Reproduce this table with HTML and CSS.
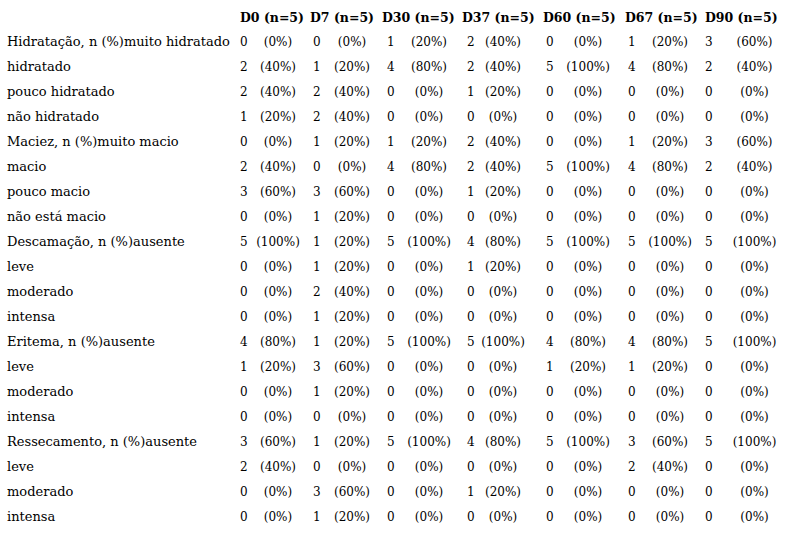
FILE: index.html
```html
<!DOCTYPE html>
<html lang="pt">
<head>
<meta charset="utf-8">
<link rel="stylesheet" href="styles.css">
</head>
<body>
<table class="tbl">
<colgroup>
<col class="c-label">
<col class="c-n0"><col class="c-p0">
<col class="c-n1"><col class="c-p1">
<col class="c-n2"><col class="c-p2">
<col class="c-n3"><col class="c-p3">
<col class="c-n4"><col class="c-p4">
<col class="c-n5"><col class="c-p5">
<col class="c-n6"><col class="c-p6">
</colgroup>
<thead>
<tr>
<th></th>
<th colspan="2">D0 (n=5)</th>
<th colspan="2">D7 (n=5)</th>
<th colspan="2">D30 (n=5)</th>
<th colspan="2">D37 (n=5)</th>
<th colspan="2">D60 (n=5)</th>
<th colspan="2">D67 (n=5)</th>
<th colspan="2">D90 (n=5)</th>
</tr>
</thead>
<tbody>
<tr><td>Hidratação, n (%)muito hidratado</td><td>0</td><td>(0%)</td><td>0</td><td>(0%)</td><td>1</td><td>(20%)</td><td>2</td><td>(40%)</td><td>0</td><td>(0%)</td><td>1</td><td>(20%)</td><td>3</td><td>(60%)</td></tr>
<tr><td>hidratado</td><td>2</td><td>(40%)</td><td>1</td><td>(20%)</td><td>4</td><td>(80%)</td><td>2</td><td>(40%)</td><td>5</td><td>(100%)</td><td>4</td><td>(80%)</td><td>2</td><td>(40%)</td></tr>
<tr><td>pouco hidratado</td><td>2</td><td>(40%)</td><td>2</td><td>(40%)</td><td>0</td><td>(0%)</td><td>1</td><td>(20%)</td><td>0</td><td>(0%)</td><td>0</td><td>(0%)</td><td>0</td><td>(0%)</td></tr>
<tr><td>não hidratado</td><td>1</td><td>(20%)</td><td>2</td><td>(40%)</td><td>0</td><td>(0%)</td><td>0</td><td>(0%)</td><td>0</td><td>(0%)</td><td>0</td><td>(0%)</td><td>0</td><td>(0%)</td></tr>
<tr><td>Maciez, n (%)muito macio</td><td>0</td><td>(0%)</td><td>1</td><td>(20%)</td><td>1</td><td>(20%)</td><td>2</td><td>(40%)</td><td>0</td><td>(0%)</td><td>1</td><td>(20%)</td><td>3</td><td>(60%)</td></tr>
<tr><td>macio</td><td>2</td><td>(40%)</td><td>0</td><td>(0%)</td><td>4</td><td>(80%)</td><td>2</td><td>(40%)</td><td>5</td><td>(100%)</td><td>4</td><td>(80%)</td><td>2</td><td>(40%)</td></tr>
<tr><td>pouco macio</td><td>3</td><td>(60%)</td><td>3</td><td>(60%)</td><td>0</td><td>(0%)</td><td>1</td><td>(20%)</td><td>0</td><td>(0%)</td><td>0</td><td>(0%)</td><td>0</td><td>(0%)</td></tr>
<tr><td>não está macio</td><td>0</td><td>(0%)</td><td>1</td><td>(20%)</td><td>0</td><td>(0%)</td><td>0</td><td>(0%)</td><td>0</td><td>(0%)</td><td>0</td><td>(0%)</td><td>0</td><td>(0%)</td></tr>
<tr><td>Descamação, n (%)ausente</td><td>5</td><td>(100%)</td><td>1</td><td>(20%)</td><td>5</td><td>(100%)</td><td>4</td><td>(80%)</td><td>5</td><td>(100%)</td><td>5</td><td>(100%)</td><td>5</td><td>(100%)</td></tr>
<tr><td>leve</td><td>0</td><td>(0%)</td><td>1</td><td>(20%)</td><td>0</td><td>(0%)</td><td>1</td><td>(20%)</td><td>0</td><td>(0%)</td><td>0</td><td>(0%)</td><td>0</td><td>(0%)</td></tr>
<tr><td>moderado</td><td>0</td><td>(0%)</td><td>2</td><td>(40%)</td><td>0</td><td>(0%)</td><td>0</td><td>(0%)</td><td>0</td><td>(0%)</td><td>0</td><td>(0%)</td><td>0</td><td>(0%)</td></tr>
<tr><td>intensa</td><td>0</td><td>(0%)</td><td>1</td><td>(20%)</td><td>0</td><td>(0%)</td><td>0</td><td>(0%)</td><td>0</td><td>(0%)</td><td>0</td><td>(0%)</td><td>0</td><td>(0%)</td></tr>
<tr><td>Eritema, n (%)ausente</td><td>4</td><td>(80%)</td><td>1</td><td>(20%)</td><td>5</td><td>(100%)</td><td>5</td><td>(100%)</td><td>4</td><td>(80%)</td><td>4</td><td>(80%)</td><td>5</td><td>(100%)</td></tr>
<tr><td>leve</td><td>1</td><td>(20%)</td><td>3</td><td>(60%)</td><td>0</td><td>(0%)</td><td>0</td><td>(0%)</td><td>1</td><td>(20%)</td><td>1</td><td>(20%)</td><td>0</td><td>(0%)</td></tr>
<tr><td>moderado</td><td>0</td><td>(0%)</td><td>1</td><td>(20%)</td><td>0</td><td>(0%)</td><td>0</td><td>(0%)</td><td>0</td><td>(0%)</td><td>0</td><td>(0%)</td><td>0</td><td>(0%)</td></tr>
<tr><td>intensa</td><td>0</td><td>(0%)</td><td>0</td><td>(0%)</td><td>0</td><td>(0%)</td><td>0</td><td>(0%)</td><td>0</td><td>(0%)</td><td>0</td><td>(0%)</td><td>0</td><td>(0%)</td></tr>
<tr><td>Ressecamento, n (%)ausente</td><td>3</td><td>(60%)</td><td>1</td><td>(20%)</td><td>5</td><td>(100%)</td><td>4</td><td>(80%)</td><td>5</td><td>(100%)</td><td>3</td><td>(60%)</td><td>5</td><td>(100%)</td></tr>
<tr><td>leve</td><td>2</td><td>(40%)</td><td>0</td><td>(0%)</td><td>0</td><td>(0%)</td><td>0</td><td>(0%)</td><td>0</td><td>(0%)</td><td>2</td><td>(40%)</td><td>0</td><td>(0%)</td></tr>
<tr><td>moderado</td><td>0</td><td>(0%)</td><td>3</td><td>(60%)</td><td>0</td><td>(0%)</td><td>1</td><td>(20%)</td><td>0</td><td>(0%)</td><td>0</td><td>(0%)</td><td>0</td><td>(0%)</td></tr>
<tr><td>intensa</td><td>0</td><td>(0%)</td><td>1</td><td>(20%)</td><td>0</td><td>(0%)</td><td>0</td><td>(0%)</td><td>0</td><td>(0%)</td><td>0</td><td>(0%)</td><td>0</td><td>(0%)</td></tr>
</tbody>
</table>
</body>
</html>
```

FILE: styles.css
```css
html, body {
  margin: 0;
  padding: 0;
  background: #ffffff;
}

body {
  font-family: "DejaVu Serif", "Liberation Serif", serif;
  font-size: 12px;
  color: #000000;
}

.tbl {
  margin-top: 5px;
  border-collapse: collapse;
  table-layout: fixed;
  width: 787px;
}

.tbl th,
.tbl td {
  padding: 0;
  white-space: nowrap;
  vertical-align: middle;
}

.tbl thead tr { height: 24px; }
.tbl tbody tr { height: 25px; }

.tbl th {
  font-weight: bold;
  font-size: 12.5px;
  text-align: left;
}

.c-label { width: 236px; }
.c-n0 { width: 16px; } .c-p0 { width: 52px; }
.c-n1 { width: 22px; } .c-p1 { width: 52px; }
.c-n2 { width: 22px; } .c-p2 { width: 58px; }
.c-n3 { width: 22px; } .c-p3 { width: 46px; }
.c-n4 { width: 34px; } .c-p4 { width: 56px; }
.c-n5 { width: 26px; } .c-p5 { width: 56px; }
.c-n6 { width: 24px; } .c-p6 { width: 65px; }

.tbl td:first-child {
  padding-left: 7px;
  font-size: 13px;
  text-align: left;
}

.tbl td:nth-child(odd) { text-align: center; }
.tbl td:first-child { text-align: left; }

.tbl td:nth-child(2) { padding-left: 4px; }
.tbl td:nth-child(4) { padding-left: 9px; }
.tbl td:nth-child(6) { padding-left: 9px; }
.tbl td:nth-child(8) { padding-left: 9px; }
.tbl td:nth-child(10) { padding-left: 20px; }
.tbl td:nth-child(12) { padding-left: 12px; }
.tbl td:nth-child(14) { padding-left: 7px; }

.tbl th:nth-child(2) { padding-left: 4px; }
.tbl th:nth-child(3) { padding-left: 6px; }
.tbl th:nth-child(4) { padding-left: 4px; }
.tbl th:nth-child(5) { padding-left: 4px; }
.tbl th:nth-child(6) { padding-left: 17px; }
.tbl th:nth-child(7) { padding-left: 9px; }
.tbl th:nth-child(8) { padding-left: 7px; }
```
